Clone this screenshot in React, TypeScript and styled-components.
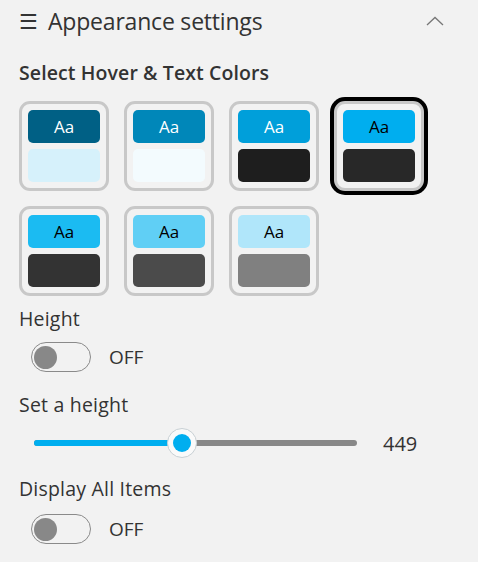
import React from "react";
import styled, { createGlobalStyle } from "styled-components";

const Global = createGlobalStyle`
  html, body { margin: 0; padding: 0; background: #f2f2f2; }
  body { font-family: "Open Sans", "Noto Sans", sans-serif; color: #333; }
`;

const Panel = styled.div`
  width: 478px;
  height: 562px;
  box-sizing: border-box;
  padding: 6px 0 0 19px;
  background: #f2f2f2;
  display: flex;
  flex-direction: column;
`;

const Header = styled.div`
  display: flex;
  align-items: center;
  justify-content: space-between;
  width: 425px;
  height: 30px;
`;

const Title = styled.div`
  font-size: 23px;
  line-height: 30px;
  color: #333;
  display: flex;
  align-items: center;
  letter-spacing: -0.2px;
`;

const Burger = styled.span`
  display: inline-block;
  width: 29px;
  font-size: 21px;
`;

const Subtitle = styled.div`
  margin-top: 24px;
  font-size: 19.5px;
  font-weight: 600;
  color: #333;
  line-height: 26px;
  letter-spacing: 0.1px;
`;

const Grid = styled.div`
  margin-top: 15px;
  display: grid;
  grid-template-columns: repeat(4, 90px);
  gap: 15px;
`;

const Card = styled.div<{ $selected?: boolean }>`
  width: 90px;
  height: 90px;
  box-sizing: border-box;
  border: 3px solid #c8c8c8;
  border-radius: 11px;
  padding: 6px;
  display: flex;
  flex-direction: column;
  gap: 6px;
  background: #f2f2f2;
  box-shadow: ${(p) => (p.$selected ? "0 0 0 4px #000" : "none")};
`;

const Top = styled.div<{ $bg: string; $fg: string }>`
  height: 33px;
  border-radius: 5px;
  background: ${(p) => p.$bg};
  color: ${(p) => p.$fg};
  display: flex;
  align-items: center;
  justify-content: center;
  font-size: 17px;
`;

const Bottom = styled.div<{ $bg: string }>`
  height: 33px;
  border-radius: 5px;
  background: ${(p) => p.$bg};
`;

const Label = styled.div<{ $mt: number }>`
  margin-top: ${(p) => p.$mt}px;
  font-size: 19.5px;
  color: #333;
  line-height: 26px;
  letter-spacing: 0.2px;
`;

const ToggleRow = styled.div<{ $mt: number }>`
  margin-top: ${(p) => p.$mt}px;
  margin-left: 12px;
  display: flex;
  align-items: center;
  gap: 18px;
`;

const Toggle = styled.div`
  width: 60px;
  height: 30px;
  box-sizing: border-box;
  border: 1px solid #8a8a8a;
  border-radius: 15px;
  padding: 2px;
  display: flex;
  align-items: center;
`;

const Knob = styled.div`
  width: 23px;
  height: 23px;
  border-radius: 50%;
  background: #888;
`;

const ToggleText = styled.span`
  font-size: 19px;
  color: #333;
`;

const SliderRow = styled.div`
  margin-top: 10px;
  margin-left: 15px;
  height: 30px;
  display: flex;
  align-items: center;
  gap: 26px;
`;

const Track = styled.div`
  position: relative;
  width: 323px;
  height: 6px;
  border-radius: 3px;
  background: #888;
`;

const Fill = styled.div`
  position: absolute;
  left: 0;
  top: 0;
  height: 6px;
  border-radius: 3px;
  background: #00aeef;
`;

const Thumb = styled.div`
  position: absolute;
  top: 50%;
  width: 30px;
  height: 30px;
  box-sizing: border-box;
  transform: translate(-50%, -50%);
  border-radius: 50%;
  background: #fafafa;
  border: 1px solid #c8d0d4;
  display: flex;
  align-items: center;
  justify-content: center;
  &::after {
    content: "";
    width: 18px;
    height: 18px;
    border-radius: 50%;
    background: #00aeef;
  }
`;

const Value = styled.span`
  font-size: 20px;
  color: #333;
`;

const swatches = [
  { top: "#006085", fg: "#fff", bottom: "#d6f1fb" },
  { top: "#0087b9", fg: "#fff", bottom: "#f3fbfe" },
  { top: "#009fda", fg: "#fff", bottom: "#1e1e1e" },
  { top: "#00aeef", fg: "#000", bottom: "#282828", selected: true },
  { top: "#1bbbf2", fg: "#000", bottom: "#333333" },
  { top: "#60cff5", fg: "#000", bottom: "#4b4b4b" },
  { top: "#b0e6fa", fg: "#000", bottom: "#808080" },
];

const Chevron = () => (
  <svg width="18" height="10" viewBox="0 0 18 10">
    <path d="M1 9 L9 1.5 L17 9" fill="none" stroke="#777" strokeWidth="1.3" />
  </svg>
);

export default function App() {
  const pct = (182 - 34) / 323;
  return (
    <Panel>
      <Global />
      <Header>
        <Title>
          <Burger>☰</Burger>
          <span>Appearance settings</span>
        </Title>
        <Chevron />
      </Header>
      <Subtitle>Select Hover &amp; Text Colors</Subtitle>
      <Grid>
        {swatches.map((s, i) => (
          <Card key={i} $selected={s.selected}>
            <Top $bg={s.top} $fg={s.fg}>Aa</Top>
            <Bottom $bg={s.bottom} />
          </Card>
        ))}
      </Grid>
      <Label $mt={10}>Height</Label>
      <ToggleRow $mt={10}>
        <Toggle><Knob /></Toggle>
        <ToggleText>OFF</ToggleText>
      </ToggleRow>
      <Label $mt={20}>Set a height</Label>
      <SliderRow>
        <Track>
          <Fill style={{ width: `${pct * 100}%` }} />
          <Thumb style={{ left: `${pct * 100}%` }} />
        </Track>
        <Value>449</Value>
      </SliderRow>
      <Label $mt={18}>Display All Items</Label>
      <ToggleRow $mt={12}>
        <Toggle><Knob /></Toggle>
        <ToggleText>OFF</ToggleText>
      </ToggleRow>
    </Panel>
  );
}
